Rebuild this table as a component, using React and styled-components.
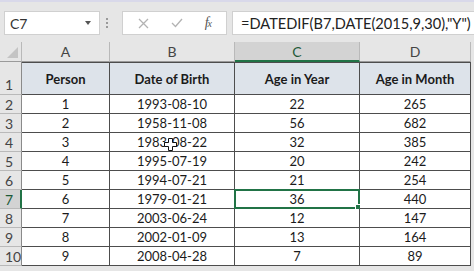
import React from "react";
import styled, { createGlobalStyle } from "styled-components";

const GlobalStyle = createGlobalStyle`
  html, body {
    margin: 0;
    padding: 0;
    background: #e6e6e6;
    overflow: hidden;
  }
  * {
    box-sizing: border-box;
  }
`;

const GREEN = "#217346";
const GRID = "#4d4d4d";
const HEAD_LINE = "#b9b9b9";

const Sheet = styled.div`
  width: 474px;
  height: 271px;
  background: #e6e6e6;
  font-family: Lato, "Liberation Sans", sans-serif;
  overflow: hidden;
`;

const FormulaBar = styled.div`
  display: flex;
  align-items: center;
  height: 42px;
  padding: 2px 0 0 4px;
  border-top: 2px solid #d9d9ea;
`;

const NameBox = styled.div`
  display: flex;
  align-items: center;
  justify-content: space-between;
  width: 96px;
  height: 24px;
  padding: 0 8px 0 5px;
  background: #fff;
  border: 1px solid #d0d0d0;
  font-size: 14px;
  color: #333;
`;

const Caret = styled.span`
  width: 0;
  height: 0;
  border-left: 3px solid transparent;
  border-right: 3px solid transparent;
  border-top: 4px solid #555;
`;

const Grip = styled.div`
  width: 22px;
  height: 24px;
  display: flex;
  flex-direction: column;
  justify-content: center;
  gap: 2px;
  padding-left: 6px;

  span {
    width: 2px;
    height: 2px;
    background: #9a9a9a;
  }
`;

const ButtonsBox = styled.div`
  display: flex;
  align-items: center;
  justify-content: space-around;
  width: 105px;
  height: 24px;
  padding: 0 4px;
  background: #fff;
  border: 1px solid #d0d0d0;
  margin-right: 5px;
`;

const Fx = styled.span`
  font-family: "Liberation Serif", serif;
  font-style: italic;
  font-size: 14px;
  color: #555;
  letter-spacing: -1px;

  sub {
    font-size: 10px;
    vertical-align: baseline;
  }
`;

const FormulaInput = styled.div`
  flex: 1;
  height: 24px;
  display: flex;
  align-items: center;
  padding-left: 8px;
  background: #fff;
  border: 1px solid #d0d0d0;
  border-right: none;
  font-size: 14.6px;
  color: #222;
  white-space: nowrap;
`;

const Grid = styled.div`
  display: grid;
  grid-template-columns: 22px 88px 125px 125px 111px 1fr;
  grid-template-rows: 20px 33px repeat(9, 19px) 1fr;
  height: 229px;
`;

const Corner = styled.div`
  position: relative;
  background: #e6e6e6;
  border-right: 1px solid ${HEAD_LINE};
  border-bottom: 1px solid #9a9a9a;

  &::after {
    content: "";
    position: absolute;
    right: 3px;
    bottom: 3px;
    width: 0;
    height: 0;
    border-left: 11px solid transparent;
    border-bottom: 11px solid #c4c4c4;
  }
`;

const ColHead = styled.div`
  display: flex;
  align-items: center;
  justify-content: center;
  font-size: 14px;
  color: ${({ $active }) => ($active ? "#1e5a38" : "#444")};
  background: ${({ $active }) => ($active ? "#d3d3d3" : "#e6e6e6")};
  border-right: 1px solid ${HEAD_LINE};
  border-bottom: ${({ $active }) =>
    $active ? `2px solid ${GREEN}` : "1px solid #9a9a9a"};
`;

const RowHead = styled.div`
  display: flex;
  align-items: ${({ $tall }) => ($tall ? "flex-end" : "center")};
  padding: ${({ $tall }) => ($tall ? "0 0 1px 5px" : "0 0 0 5px")};
  font-size: 14px;
  color: ${({ $active }) => ($active ? "#1e5a38" : "#444")};
  background: ${({ $active }) => ($active ? "#d3d3d3" : "#e6e6e6")};
  border-bottom: 1px solid ${HEAD_LINE};
  border-right: ${({ $active }) =>
    $active ? `2px solid ${GREEN}` : `1px solid #8a8a8a`};
`;

const Cell = styled.div`
  position: relative;
  display: flex;
  align-items: center;
  justify-content: center;
  font-size: 13px;
  font-weight: ${({ $head }) => ($head ? 700 : 400)};
  color: #1b1b1b;
  background: ${({ $head }) => ($head ? "#dde3ea" : "#fff")};
  border-right: 1px solid ${GRID};
  border-bottom: 1px solid ${GRID};
  border-top: ${({ $head }) => ($head ? `1px solid ${GRID}` : "none")};
`;

const Selection = styled.span`
  position: absolute;
  left: -1px;
  top: -1px;
  right: -1px;
  bottom: -1px;
  border: 2px solid ${GREEN};
  pointer-events: none;

  &::after {
    content: "";
    position: absolute;
    right: -4px;
    bottom: -4px;
    width: 5px;
    height: 5px;
    background: ${GREEN};
    border: 1px solid #fff;
  }
`;

const Filler = styled.div`
  background: #e6e6e6;
`;

const Cursor = styled.svg`
  position: absolute;
  left: 50%;
  top: 50%;
  margin-left: -8px;
  margin-top: -4px;
`;

const headers = ["Person", "Date of Birth", "Age in Year", "Age in Month"];

const rows = [
  [1, "1993-08-10", 22, 265],
  [2, "1958-11-08", 56, 682],
  [3, "1983-08-22", 32, 385],
  [4, "1995-07-19", 20, 242],
  [5, "1994-07-21", 21, 254],
  [6, "1979-01-21", 36, 440],
  [7, "2003-06-24", 12, 147],
  [8, "2002-01-09", 13, 164],
  [9, "2008-04-28", 7, 89],
];

const PlusCursor = () => (
  <Cursor width="13" height="13" viewBox="0 0 13 13">
    <path
      d="M4.5 0.5 H8.5 V4.5 H12.5 V8.5 H8.5 V12.5 H4.5 V8.5 H0.5 V4.5 H4.5 Z"
      fill="#fff"
      stroke="#111"
      strokeWidth="1"
    />
  </Cursor>
);

const App = () => (
  <Sheet>
    <GlobalStyle />
    <FormulaBar>
      <NameBox>
        C7
        <Caret />
      </NameBox>
      <Grip>
        <span />
        <span />
        <span />
      </Grip>
      <ButtonsBox>
        <svg width="11" height="11" viewBox="0 0 11 11">
          <path d="M1 1 L10 10 M10 1 L1 10" stroke="#b3b3b3" strokeWidth="1.3" />
        </svg>
        <svg width="12" height="10" viewBox="0 0 12 10">
          <path d="M1 5 L4.5 8.5 L11 1" stroke="#b3b3b3" strokeWidth="1.3" fill="none" />
        </svg>
        <Fx>
          f<sub>x</sub>
        </Fx>
      </ButtonsBox>
      <FormulaInput>=DATEDIF(B7,DATE(2015,9,30),"Y")</FormulaInput>
    </FormulaBar>

    <Grid>
      <Corner />
      {["A", "B", "C", "D"].map((c) => (
        <ColHead key={c} $active={c === "C"}>
          {c}
        </ColHead>
      ))}
      <Filler />

      <RowHead $tall>1</RowHead>
      {headers.map((h) => (
        <Cell key={h} $head>
          {h}
        </Cell>
      ))}
      <Filler />

      {rows.map((r, i) => (
        <React.Fragment key={i}>
          <RowHead $active={i === 5}>{i + 2}</RowHead>
          {r.map((v, j) => (
            <Cell key={j}>
              {v}
              {i === 5 && j === 2 && <Selection />}
              {i === 2 && j === 1 && <PlusCursor />}
            </Cell>
          ))}
          <Filler />
        </React.Fragment>
      ))}
    </Grid>
  </Sheet>
);

export default App;
